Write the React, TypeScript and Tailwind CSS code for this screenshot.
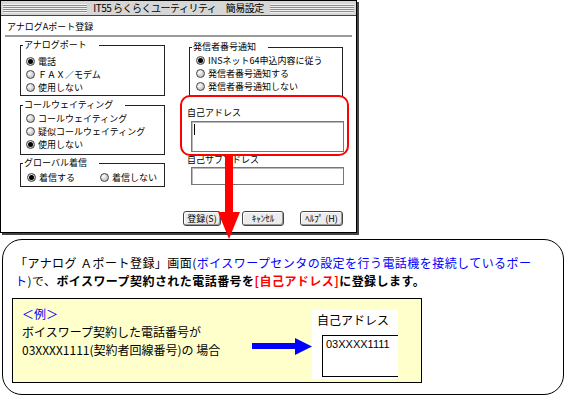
import React from "react";

const jp = "font-['Noto_Sans_CJK_JP',sans-serif]";

function Radio({ on, label, className = "" }: { on?: boolean; label: string; className?: string }) {
  return (
    <div className={`flex items-center h-[13px] ${className}`}>
      <span className="w-[9px] h-[9px] rounded-full border border-[#444] bg-[radial-gradient(circle_at_35%_35%,#ffffff,#a8a8a8)] flex items-center justify-center shrink-0">
        {on && <span className="w-[5px] h-[5px] rounded-full bg-black" />}
      </span>
      <span className="ml-[3px] leading-[13px] whitespace-nowrap">{label}</span>
    </div>
  );
}

function Group({ title, className, children }: { title: string; className: string; children: React.ReactNode }) {
  return (
    <div className={`relative border border-[#222] ${className}`}>
      <span className="absolute -top-[7px] left-[2px] bg-white pl-[1px] pr-[12px] leading-[12px] whitespace-nowrap">
        {title}
      </span>
      {children}
    </div>
  );
}

function Btn({ label, className }: { label: string; className: string }) {
  return (
    <div
      className={`h-[15px] rounded-[3px] border border-[#444] bg-[#ececec] shadow-[inset_-1px_-1px_0_#999,inset_1px_1px_0_#fff] flex items-center justify-center leading-[12px] whitespace-nowrap ${className}`}
    >
      {label}
    </div>
  );
}

export default function App() {
  return (
    <div className={`relative w-[565px] h-[397px] bg-white overflow-hidden text-black ${jp}`}>
      {/* dialog window */}
      <div className="w-[357px] h-[233px] border border-black shadow-[2px_2px_0_#444] flex flex-col text-[9px]">
        <div className="h-[15px] bg-[#d6d6d6] border-b border-[#444] flex items-center px-[2px]">
          <div className="flex-1 h-[9px] bg-[repeating-linear-gradient(to_bottom,#f2f2f2_0px,#f2f2f2_1px,#8c8c8c_1px,#8c8c8c_2px)]" />
          <span className="px-[6px] text-[10px] leading-[12px] tracking-[-0.5px] whitespace-nowrap">IT55 らくらくユーティリティ　簡易設定</span>
          <div className="flex-1 h-[9px] bg-[repeating-linear-gradient(to_bottom,#f2f2f2_0px,#f2f2f2_1px,#8c8c8c_1px,#8c8c8c_2px)]" />
        </div>
        <div className="mt-[5px] pl-[6px] leading-[12px]">アナログAポート登録</div>
        <div className="mt-[2px] mx-[4px] h-[2px] bg-[#9a9a9a]" />

        <div className="flex mt-[8px]">
          {/* left column */}
          <div className="ml-[19px] w-[145px] flex flex-col">
            <Group title="アナログポート" className="h-[51px] pt-[9px] pl-[5px]">
              <Radio on label="電話" />
              <Radio label="ＦＡＸ／モデム" />
              <Radio label="使用しない" />
            </Group>
            <Group title="コールウェイティング" className="mt-[9px] h-[50px] pt-[6px] pl-[5px]">
              <Radio label="コールウェイティング" />
              <Radio label="疑似コールウェイティング" />
              <Radio on label="使用しない" />
            </Group>
            <Group title="グローバル着信" className="mt-[8px] h-[24px] pt-[7px] pl-[6px] flex">
              <Radio on label="着信する" />
              <Radio label="着信しない" className="ml-[25px]" />
            </Group>
          </div>

          {/* right column */}
          <div className="ml-[22px] w-[157px] flex flex-col mt-[2px]">
            <Group title="発信者番号通知" className="ml-[2px] mr-[1px] h-[50px] pt-[6px] pl-[6px]">
              <Radio on label="INSネット64申込内容に従う" />
              <Radio label="発信者番号通知する" />
              <Radio label="発信者番号通知しない" />
            </Group>
            <div className="mt-[10px] leading-[12px]">自己アドレス</div>
            <div className="mt-[2px] ml-[4px] h-[31px] border border-[#777] shadow-[inset_1px_1px_0_#bbb] pl-[2px] pt-[2px]">
              <div className="w-px h-[11px] bg-black" />
            </div>
            <div className="mt-[2px] leading-[12px]">自己サブアドレス</div>
            <div className="mt-[1px] ml-[4px] h-[18px] border border-[#777] shadow-[inset_1px_1px_0_#bbb]" />
            <div className="mt-[26px] -ml-[4px] flex">
              <Btn label="登録(S)" className="w-[38px]" />
              <Btn label="ｷｬﾝｾﾙ" className="ml-[21px] w-[42px]" />
              <Btn label="ﾍﾙﾌﾟ (H)" className="ml-[16px] w-[43px]" />
            </div>
          </div>
        </div>
      </div>

      {/* red highlight and arrow */}
      <div className="absolute left-[180px] top-[95px] w-[169px] h-[61px] border-2 border-[#ff0000] rounded-[10px]" />
      <svg className="absolute left-[215px] top-[154px]" width="30" height="87" viewBox="0 0 30 87">
        <rect x="10" y="0" width="8" height="59" fill="#ff0000" />
        <polygon points="3,58 25,58 14,85" fill="#ff0000" />
      </svg>

      {/* explanation callout */}
      <div className="mt-[6px] ml-[2px] w-[562px] h-[156px] border border-black rounded-[20px] pt-[14px]">
        <div className="pl-[12px] text-[12px] leading-[18px] tracking-[0.45px] whitespace-nowrap">
          「アナログ Ａポート登録」画面(
          <span className="text-[#0000ff]">ボイスワープセンタの設定を行う電話機を接続しているポー</span>
          <br />
          <span className="text-[#0000ff]">ト</span>)で、
          <b>ボイスワープ契約された電話番号を</b>
          <b className="text-[#ff0000]">[自己アドレス]</b>
          <b>に登録します。</b>
        </div>

        <div className="mt-[8px] ml-[9px] w-[410px] h-[85px] border border-black bg-[#ffffcc] flex items-start">
          <div className="w-[239px] pl-[9px] pt-[6px] text-[12px] leading-[18px] whitespace-nowrap">
            <div className="text-[#0000ff]">＜例＞</div>
            <div>ボイスワープ契約した電話番号が</div>
            <div>03XXXX1111(契約者回線番号)の 場合</div>
          </div>
          <svg className="mt-[39px] shrink-0" width="60" height="17" viewBox="0 0 60 17">
            <rect x="0" y="5" width="44" height="6" fill="#0000ff" />
            <polygon points="43,0 60,8.5 43,17" fill="#0000ff" />
          </svg>
          <div className="mt-[11px] w-[86px] h-[69px] bg-white overflow-hidden pt-[3px] shrink-0">
            <div className="pl-[5px] text-[12px] leading-[14px] whitespace-nowrap">自己アドレス</div>
            <div className="mt-[8px] ml-[10px] w-[90px] h-[42px] border border-black pl-[3px] pt-[2px] font-['Liberation_Sans',sans-serif] text-[11px] leading-[13px]">
              03XXXX1111
            </div>
          </div>
        </div>
      </div>
    </div>
  );
}
